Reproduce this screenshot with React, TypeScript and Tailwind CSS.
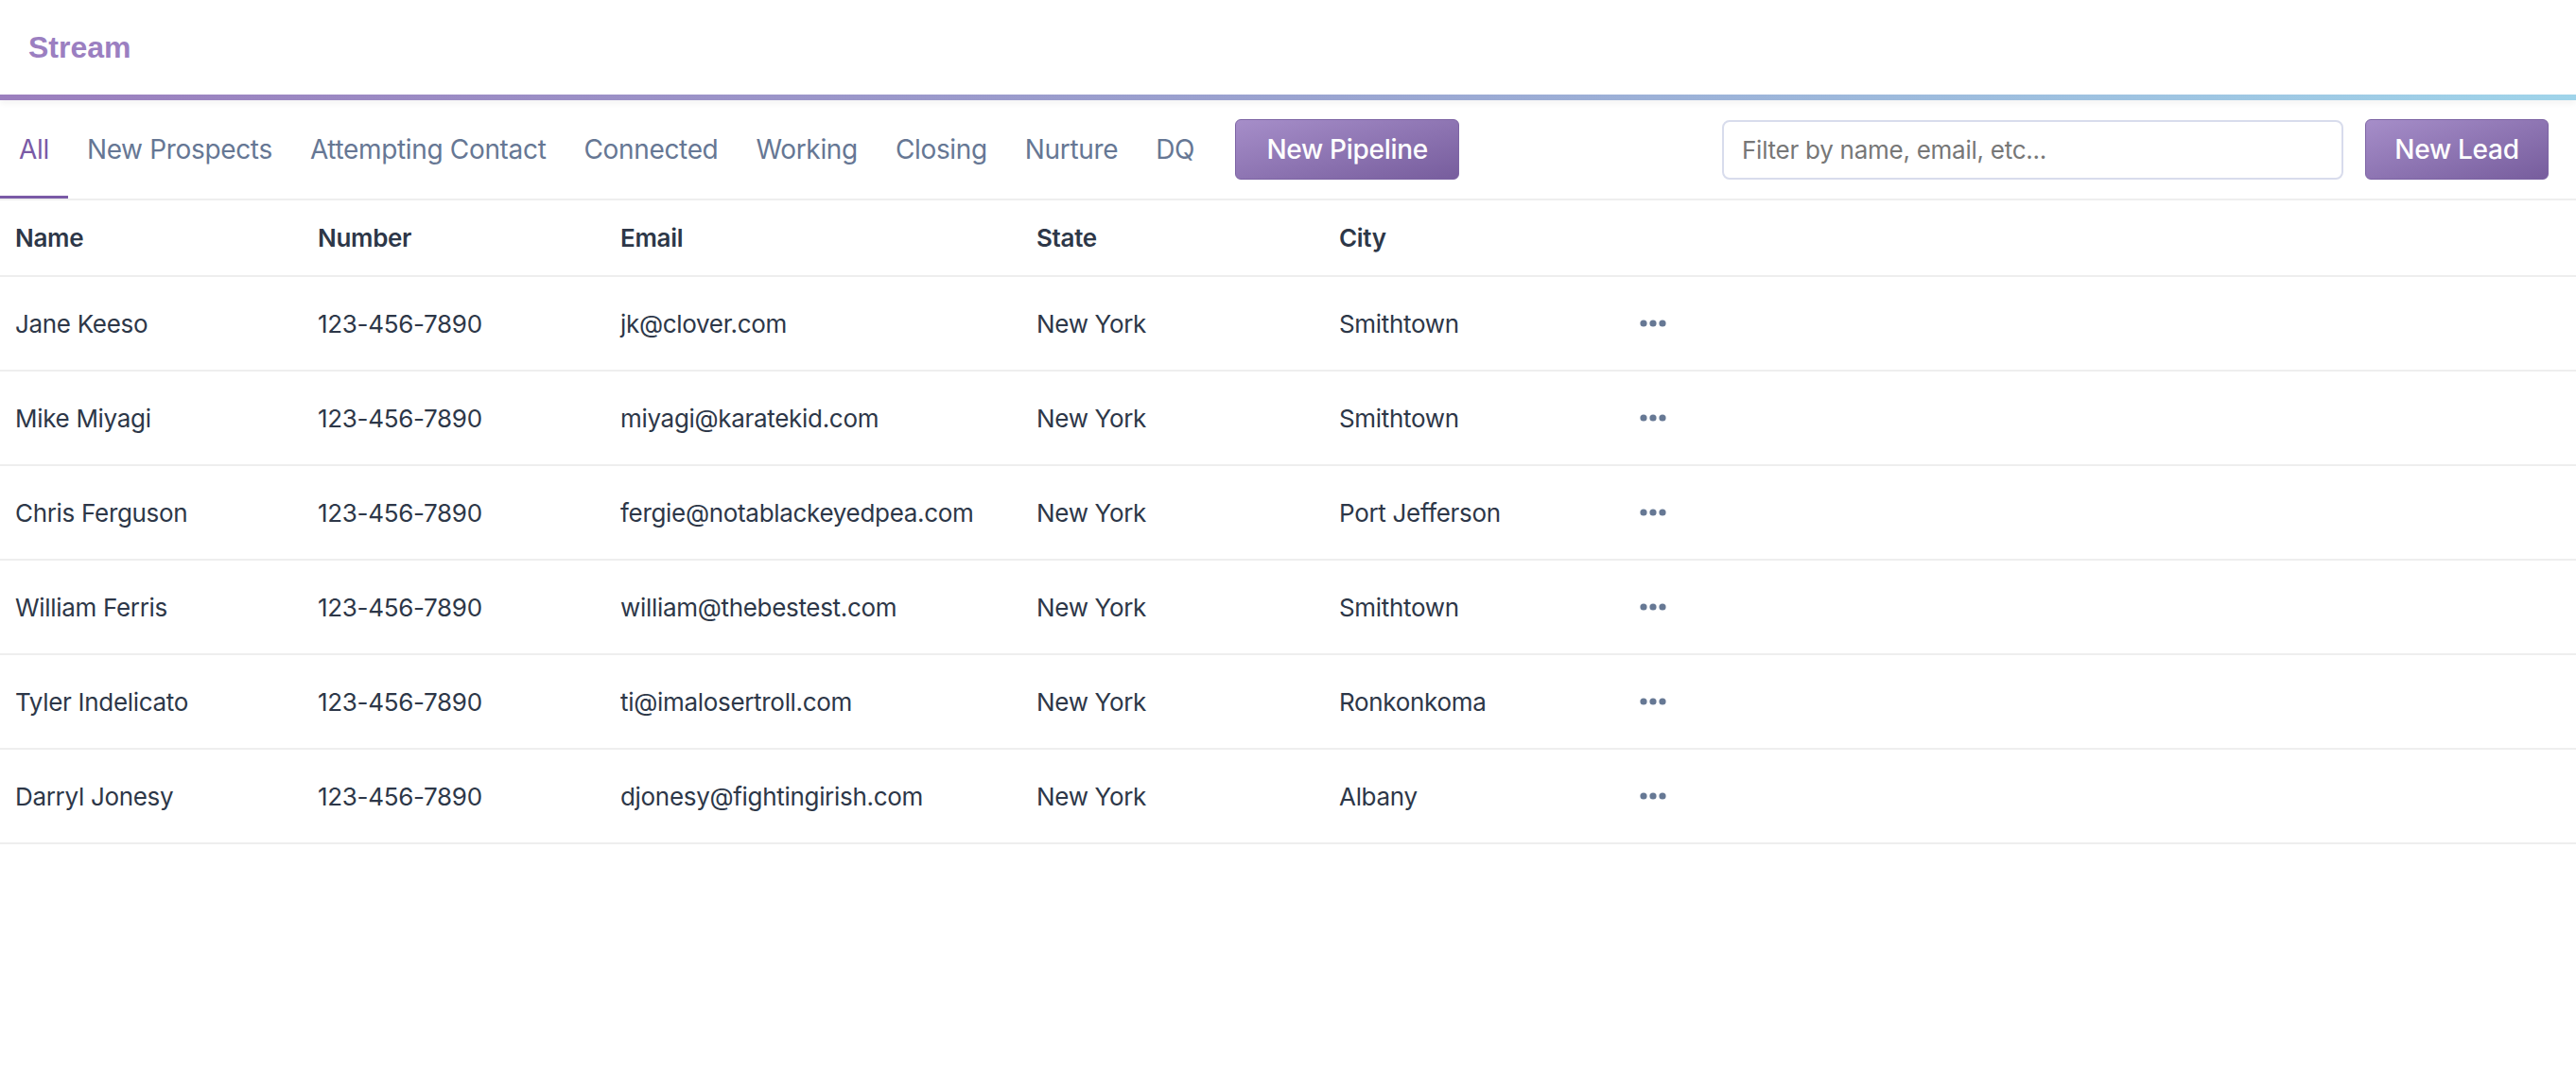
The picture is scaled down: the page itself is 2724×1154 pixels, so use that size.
import React from "react";

const tabs = ["All", "New Prospects", "Attempting Contact", "Connected", "Working", "Closing", "Nurture", "DQ"];

const leads = [
  { name: "Jane Keeso", number: "123-456-7890", email: "jk@clover.com", state: "New York", city: "Smithtown" },
  { name: "Mike Miyagi", number: "123-456-7890", email: "miyagi@karatekid.com", state: "New York", city: "Smithtown" },
  { name: "Chris Ferguson", number: "123-456-7890", email: "fergie@notablackeyedpea.com", state: "New York", city: "Port Jefferson" },
  { name: "William Ferris", number: "123-456-7890", email: "william@thebestest.com", state: "New York", city: "Smithtown" },
  { name: "Tyler Indelicato", number: "123-456-7890", email: "ti@imalosertroll.com", state: "New York", city: "Ronkonkoma" },
  { name: "Darryl Jonesy", number: "123-456-7890", email: "djonesy@fightingirish.com", state: "New York", city: "Albany" },
];

function Dots() {
  return (
    <svg width="30" height="8" viewBox="0 0 30 8" fill="#667894">
      <circle cx="4" cy="4" r="3.6" />
      <circle cx="14" cy="4" r="3.6" />
      <circle cx="24" cy="4" r="3.6" />
    </svg>
  );
}

export default function App() {
  return (
    <div className="min-h-screen bg-white font-['Inter',sans-serif] text-[#2d3748]">
      {/* Top header */}
      <div className="h-[100px] flex items-center pl-[30px]">
        <span className="font-['Liberation_Sans',Arial,sans-serif] font-bold text-[32px] text-[#9b7fc1] leading-none">
          Stream
        </span>
      </div>
      <div className="h-[6px] bg-gradient-to-r from-[#9b7fbe] via-[#9aa3d0] to-[#9fd4ea] shadow-[0_3px_6px_rgba(0,0,0,0.06)]" />

      {/* Tabs + actions */}
      <div className="flex items-stretch h-[106px] border-b-2 border-[#eeeeee]">
        <nav className="flex items-stretch">
          {tabs.map((tab, i) => (
            <button
              key={tab}
              className={
                i === 0
                  ? "px-[20px] text-[28px] tracking-[-0.012em] text-[#7a5aa6] border-b-[3px] border-[#7a5aa6] pt-[3px]"
                  : "px-[20px] text-[28px] tracking-[-0.012em] text-[#667794] border-b-[3px] border-transparent pt-[3px]"
              }
            >
              {tab}
            </button>
          ))}
        </nav>
        <div className="flex items-center ml-[23px]">
          <button className="h-[64px] w-[237px] rounded-[6px] border border-[#7d64a4] bg-gradient-to-br from-[#a68ec9] to-[#775d9d] text-white text-[28px] font-medium tracking-[-0.01em]">
            New Pipeline
          </button>
        </div>
        <div className="flex items-center ml-auto gap-[23px] pr-[29px]">
          <input
            type="text"
            placeholder="Filter by name, email, etc..."
            className="h-[63px] w-[657px] rounded-[8px] border-2 border-[#d8dcec] px-[19px] text-[26px] tracking-[-0.01em] placeholder:text-[#777777] outline-none"
          />
          <button className="h-[64px] w-[194px] rounded-[6px] border border-[#7d64a4] bg-gradient-to-br from-[#a68ec9] to-[#775d9d] text-white text-[28px] font-medium tracking-[-0.01em]">
            New Lead
          </button>
        </div>
      </div>

      {/* Leads table */}
      <table className="w-full table-fixed border-collapse text-[26px] tracking-[-0.012em]">
        <thead>
          <tr className="h-[80px] border-b-2 border-[#eeeeee]">
            <th className="w-[320px] pl-4 text-left font-semibold">Name</th>
            <th className="w-[320px] pl-4 text-left font-semibold">Number</th>
            <th className="w-[440px] pl-4 text-left font-semibold">Email</th>
            <th className="w-[320px] pl-4 text-left font-semibold">State</th>
            <th className="w-[320px] pl-4 text-left font-semibold">City</th>
            <th />
          </tr>
        </thead>
        <tbody>
          {leads.map((lead) => (
            <tr key={lead.name} className="h-[100px] border-b-2 border-[#eeeeee]">
              <td className="pl-4">{lead.name}</td>
              <td className="pl-4">{lead.number}</td>
              <td className="pl-4">{lead.email}</td>
              <td className="pl-4">{lead.state}</td>
              <td className="pl-4">{lead.city}</td>
              <td className="pl-[14px]">
                <Dots />
              </td>
            </tr>
          ))}
        </tbody>
      </table>
    </div>
  );
}
